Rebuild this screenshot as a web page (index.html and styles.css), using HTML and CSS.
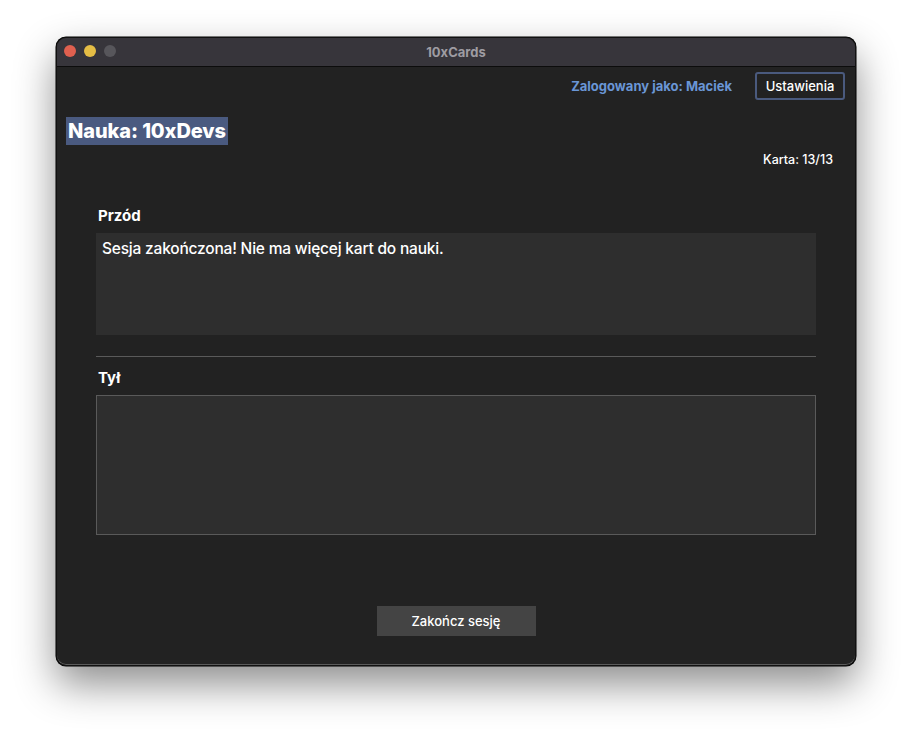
FILE: index.html
```html
<!DOCTYPE html>
<html lang="pl">
<head>
<meta charset="utf-8">
<title>10xCards</title>
<link rel="stylesheet" href="styles.css">
</head>
<body>
<div class="window">
  <div class="titlebar">
    <div class="lights">
      <span class="light red"></span>
      <span class="light yellow"></span>
      <span class="light gray"></span>
    </div>
    <div class="title">10xCards</div>
  </div>
  <div class="content">
    <div class="topbar">
      <span class="user">Zalogowany jako: Maciek</span>
      <button class="settings">Ustawienia</button>
    </div>
    <div class="heading-row"><h1 class="heading">Nauka: 10xDevs</h1></div>
    <div class="counter">Karta: 13/13</div>
    <div class="card">
      <div class="label">Przód</div>
      <div class="front">Sesja zakończona! Nie ma więcej kart do nauki.</div>
      <div class="sep"></div>
      <div class="label label-back">Tył</div>
      <div class="back"></div>
    </div>
    <div class="actions">
      <button class="end">Zakończ sesję</button>
    </div>
  </div>
</div>
</body>
</html>
```
FILE: styles.css
```css
* { box-sizing: border-box; }
html, body { margin: 0; padding: 0; background: #ffffff; }
body {
  padding: 37px 0 0 56px;
  font-family: Inter, "Liberation Sans", sans-serif;
  height: 740px;
  overflow: hidden;
}
.window {
  width: 800px;
  height: 629px;
  border-radius: 10px;
  background: #222222;
  border: 1px solid #111;
  box-shadow: 0 0 0 0.5px #000, inset 0 -1px 0 #5a5a5a, 0 18px 40px rgba(0,0,0,0.45);
  overflow: hidden;
  display: flex;
  flex-direction: column;
}
.titlebar {
  height: 29px;
  flex: none;
  background: #37353b;
  border-bottom: 1px solid #0c0c0c;
  position: relative;
  display: flex;
  align-items: center;
  justify-content: center;
}
.lights {
  position: absolute;
  left: 7px;
  top: 7px;
  display: flex;
  gap: 8px;
}
.light { width: 12px; height: 12px; border-radius: 50%; display: block; }
.red { background: #e0604f; }
.yellow { background: #e5bd45; }
.gray { background: #57565b; }
.title {
  color: #9e9ca2;
  font-size: 13px;
  font-weight: 700;
}
.content {
  flex: 1;
  display: flex;
  flex-direction: column;
  padding: 5px 0 0 0;
}
.topbar {
  display: flex;
  justify-content: flex-end;
  align-items: center;
  gap: 23px;
  padding-right: 10px;
  height: 28px;
}
.user {
  color: #6a96d6;
  font-size: 13px;
  font-weight: 700;
}
.settings {
  height: 28px;
  width: 90px;
  background: #222;
  border: 2px solid #4a5a7e;
  border-radius: 3px;
  color: #ffffff;
  font-family: inherit;
  font-size: 13px;
  font-weight: 500;
  padding: 0;
}
.heading-row { display: flex; padding-left: 9px; margin-top: 17px; }
.heading {
  margin: 0;
  background: #4a5a80;
  color: #ffffff;
  font-size: 20px;
  font-weight: 800;
  line-height: 28px;
  height: 28px;
  padding: 0 2px;
  letter-spacing: -0.1px;
}
.counter {
  margin-top: 7px;
  align-self: flex-end;
  padding-right: 22px;
  color: #ffffff;
  font-size: 12.5px;
  font-weight: 500;
  line-height: 16px;
}
.card {
  margin: 39px 39px 0 39px;
  display: flex;
  flex-direction: column;
}
.label {
  color: #ffffff;
  font-weight: 700;
  font-size: 15px;
  line-height: 18px;
  padding-left: 2px;
}
.front {
  margin-top: 8px;
  height: 102px;
  background: #2e2e2e;
  color: #ffffff;
  font-size: 15.5px;
  font-weight: 500;
  letter-spacing: -0.2px;
  line-height: 20px;
  padding: 6px 6px;
}
.sep {
  margin-top: 21px;
  height: 1px;
  background: #5a5a5a;
}
.label-back { margin-top: 12px; }
.back {
  margin-top: 8px;
  height: 140px;
  background: #2e2e2e;
  border: 1px solid #5a5a5a;
}
.actions {
  margin-top: 71px;
  display: flex;
  justify-content: center;
}
.end {
  width: 159px;
  height: 30px;
  background: #444444;
  border: none;
  color: #ffffff;
  font-family: inherit;
  font-size: 13px;
  font-weight: 500;
  padding: 0;
}
```
